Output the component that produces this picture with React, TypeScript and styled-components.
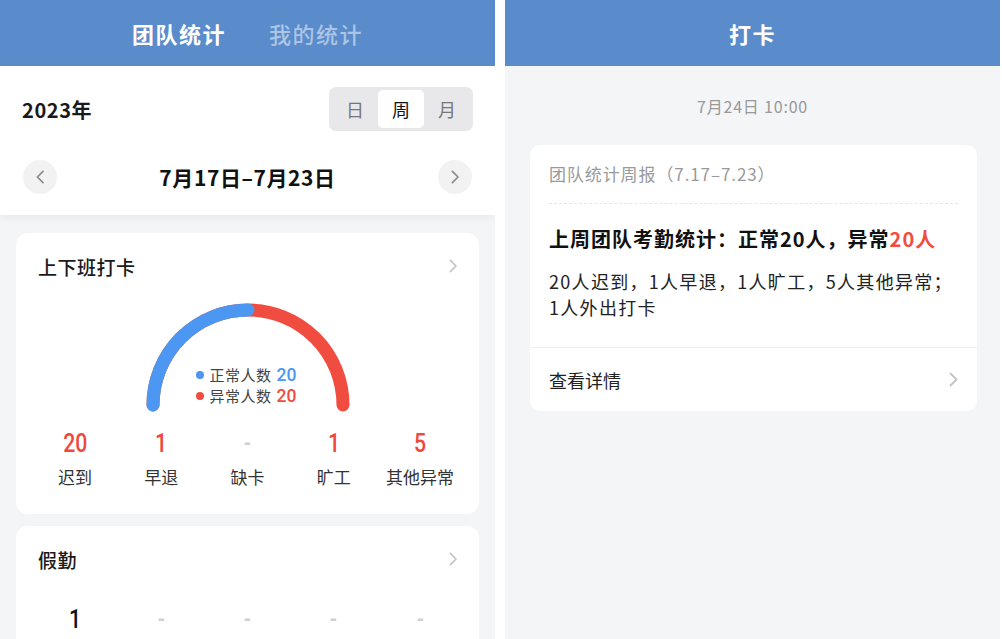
import React from "react";
import styled, { createGlobalStyle } from "styled-components";

const Global = createGlobalStyle`
  html, body { margin: 0; padding: 0; background: #ffffff; }
  body { font-family: "Noto Sans CJK SC", "Noto Sans", sans-serif; -webkit-font-smoothing: antialiased; }
  * { box-sizing: border-box; }
`;

const Page = styled.div`
  display: flex;
  gap: 10px;
  width: 1002px;
  height: 639px;
  overflow: hidden;
  background: #ffffff;
`;

const Phone = styled.div`
  width: 495px;
  height: 639px;
  display: flex;
  flex-direction: column;
  background: #f4f5f7;
  overflow: hidden;
`;

const Header = styled.div`
  height: 66px;
  flex: none;
  background: #5a8bcb;
  display: flex;
  align-items: center;
  justify-content: center;
  gap: 43px;
`;

const HeaderTab = styled.div<{ $active?: boolean }>`
  font-size: 22px;
  font-weight: ${(p) => (p.$active ? 600 : 500)};
  color: ${(p) => (p.$active ? "#ffffff" : "rgba(255,255,255,0.5)")};
  letter-spacing: 1.5px;
  line-height: 30px;
`;

const DateSection = styled.div`
  background: #ffffff;
  padding: 21px 22px 21px 22px;
  display: flex;
  flex-direction: column;
  gap: 29px;
  box-shadow: 0 3px 8px rgba(0, 0, 0, 0.05);
  position: relative;
  z-index: 1;
`;

const YearRow = styled.div`
  display: flex;
  align-items: center;
  justify-content: space-between;
`;

const Year = styled.div`
  font-size: 20px;
  font-weight: 600;
  color: #1a1a1a;
  letter-spacing: 0.6px;
`;

const Segment = styled.div`
  display: flex;
  padding: 3px;
  background: #e8e8ea;
  border-radius: 7px;
`;

const SegItem = styled.div<{ $active?: boolean }>`
  width: 46px;
  height: 38px;
  display: flex;
  align-items: center;
  justify-content: center;
  font-size: 18px;
  border-radius: 5px;
  color: ${(p) => (p.$active ? "#111" : "#777")};
  background: ${(p) => (p.$active ? "#ffffff" : "transparent")};
`;

const RangeRow = styled.div`
  display: flex;
  align-items: center;
  justify-content: space-between;
  padding: 0 1px;
`;

const CircleBtn = styled.div`
  width: 34px;
  height: 34px;
  border-radius: 50%;
  background: #f2f2f3;
  display: flex;
  align-items: center;
  justify-content: center;
  color: #8a8a8a;
`;

const RangeText = styled.div`
  font-size: 21px;
  font-weight: 600;
  color: #111;
  letter-spacing: 0.6px;
`;

const Content = styled.div`
  padding: 18px 16px 0;
  display: flex;
  flex-direction: column;
  gap: 12px;
`;

const Card = styled.div`
  background: #ffffff;
  border-radius: 12px;
  padding: 21px 22px 26px;
`;

const CardHead = styled.div`
  display: flex;
  align-items: center;
  justify-content: space-between;
  height: 24px;
`;

const CardTitle = styled.div`
  font-size: 19px;
  font-weight: 500;
  color: #1a1a1a;
  letter-spacing: 0.5px;
`;

const GaugeWrap = styled.div`
  position: relative;
  width: 220px;
  height: 120px;
  margin: 19px auto 0;
`;

const Legend = styled.div`
  position: absolute;
  left: 58px;
  top: 67px;
  display: flex;
  flex-direction: column;
`;

const LegendRow = styled.div`
  display: flex;
  align-items: center;
  height: 21px;
  line-height: 18px;
`;

const Dot = styled.span<{ $color: string }>`
  width: 8px;
  height: 8px;
  border-radius: 50%;
  background: ${(p) => p.$color};
  margin-right: 6px;
`;

const LegendLabel = styled.span`
  font-size: 15px;
  line-height: 18px;
  color: #444;
  margin-right: 5px;
  letter-spacing: 0.5px;
`;

const LegendNum = styled.span<{ $color: string }>`
  font-family: Roboto, "Noto Sans", sans-serif;
  font-size: 17.5px;
  line-height: 18px;
  font-weight: 500;
  color: ${(p) => p.$color};
`;

const Stats = styled.div<{ $top: number }>`
  display: grid;
  grid-template-columns: repeat(5, 1fr);
  margin: ${(p) => p.$top}px -6px 0;
`;

const Stat = styled.div`
  display: flex;
  flex-direction: column;
  align-items: center;
`;

const StatNum = styled.div<{ $color: string }>`
  font-family: Roboto, "Noto Sans", sans-serif;
  font-size: 25px;
  font-weight: 500;
  line-height: 28px;
  color: ${(p) => p.$color};
  transform: scaleX(0.85);
`;

const StatLabel = styled.div`
  margin-top: 8px;
  font-size: 17px;
  line-height: 22px;
  color: #333;
`;

const Chevron = ({ size = 14, color = "#c4c4c4", dir = "right" }: { size?: number; color?: string; dir?: "left" | "right" }) => (
  <svg width={size * 0.6} height={size} viewBox="0 0 9 15" fill="none">
    <path
      d={dir === "right" ? "M1.5 1.5 L7.5 7.5 L1.5 13.5" : "M7.5 1.5 L1.5 7.5 L7.5 13.5"}
      stroke={color}
      strokeWidth="1.8"
      strokeLinecap="round"
      strokeLinejoin="round"
    />
  </svg>
);

const Gauge = () => {
  const cx = 110;
  const cy = 108;
  const r = 95;
  return (
    <svg width="220" height="120" viewBox="0 0 220 120">
      <path
        d={`M ${cx - r} ${cy} A ${r} ${r} 0 0 1 ${cx + r} ${cy}`}
        stroke="#f04c40"
        strokeWidth="13"
        fill="none"
        strokeLinecap="round"
      />
      <path
        d={`M ${cx - r} ${cy} A ${r} ${r} 0 0 1 ${cx} ${cy - r}`}
        stroke="#4b97f1"
        strokeWidth="13"
        fill="none"
        strokeLinecap="round"
      />
    </svg>
  );
};

/* right panel */
const TimeStamp = styled.div`
  text-align: center;
  font-size: 16px;
  color: #999;
  margin-top: 29px;
  line-height: 22px;
  letter-spacing: 0.8px;
`;

const MsgCard = styled.div`
  margin: 28px 23px 0 25px;
  background: #ffffff;
  border-radius: 10px;
`;

const MsgBody = styled.div`
  padding: 16px 19px 27px;
`;

const MsgTitle = styled.div`
  font-size: 17px;
  color: #9a9a9a;
  line-height: 26px;
  padding-bottom: 16px;
  border-bottom: 1px dashed #e6e6e6;
  letter-spacing: 0.9px;
`;

const MsgHeadline = styled.div`
  margin-top: 22px;
  font-size: 20px;
  font-weight: 600;
  color: #111;
  line-height: 26px;
  letter-spacing: 1px;
`;

const Red = styled.span`
  color: #f04c40;
`;

const MsgText = styled.div`
  margin-top: 16px;
  font-size: 18px;
  color: #222;
  line-height: 26px;
  letter-spacing: 1.3px;
`;

const MsgFooter = styled.div`
  border-top: 1px solid #efefef;
  height: 64px;
  display: flex;
  align-items: center;
  justify-content: space-between;
  padding: 0 19px 0 19px;
  font-size: 18px;
  color: #222;
`;

const statsA = [
  { n: "20", l: "迟到", c: "#f0473c" },
  { n: "1", l: "早退", c: "#f0473c" },
  { n: "-", l: "缺卡", c: "#d0d0d0" },
  { n: "1", l: "旷工", c: "#f0473c" },
  { n: "5", l: "其他异常", c: "#f0473c" },
];

const statsB = [
  { n: "1", c: "#111" },
  { n: "-", c: "#d0d0d0" },
  { n: "-", c: "#d0d0d0" },
  { n: "-", c: "#d0d0d0" },
  { n: "-", c: "#d0d0d0" },
];

export default function App() {
  return (
    <>
      <Global />
      <Page>
        <Phone>
          <Header>
            <HeaderTab $active>团队统计</HeaderTab>
            <HeaderTab>我的统计</HeaderTab>
          </Header>
          <DateSection>
            <YearRow>
              <Year>2023年</Year>
              <Segment>
                <SegItem>日</SegItem>
                <SegItem $active>周</SegItem>
                <SegItem>月</SegItem>
              </Segment>
            </YearRow>
            <RangeRow>
              <CircleBtn>
                <Chevron size={14} color="#8a8a8a" dir="left" />
              </CircleBtn>
              <RangeText>7月17日–7月23日</RangeText>
              <CircleBtn>
                <Chevron size={14} color="#8a8a8a" />
              </CircleBtn>
            </RangeRow>
          </DateSection>
          <Content>
            <Card>
              <CardHead>
                <CardTitle>上下班打卡</CardTitle>
                <Chevron size={14} />
              </CardHead>
              <GaugeWrap>
                <Gauge />
                <Legend>
                  <LegendRow>
                    <Dot $color="#4b97f1" />
                    <LegendLabel>正常人数</LegendLabel>
                    <LegendNum $color="#4b97f1">20</LegendNum>
                  </LegendRow>
                  <LegendRow>
                    <Dot $color="#f04c40" />
                    <LegendLabel>异常人数</LegendLabel>
                    <LegendNum $color="#f04c40">20</LegendNum>
                  </LegendRow>
                </Legend>
              </GaugeWrap>
              <Stats $top={13}>
                {statsA.map((s) => (
                  <Stat key={s.l}>
                    <StatNum $color={s.c}>{s.n}</StatNum>
                    <StatLabel>{s.l}</StatLabel>
                  </Stat>
                ))}
              </Stats>
            </Card>
            <Card>
              <CardHead>
                <CardTitle>假勤</CardTitle>
                <Chevron size={14} />
              </CardHead>
              <Stats $top={35}>
                {statsB.map((s, i) => (
                  <Stat key={i}>
                    <StatNum $color={s.c}>{s.n}</StatNum>
                  </Stat>
                ))}
              </Stats>
            </Card>
          </Content>
        </Phone>
        <Phone>
          <Header>
            <HeaderTab $active>打卡</HeaderTab>
          </Header>
          <TimeStamp>7月24日 10:00</TimeStamp>
          <MsgCard>
            <MsgBody>
              <MsgTitle>团队统计周报（7.17–7.23）</MsgTitle>
              <MsgHeadline>
                上周团队考勤统计：正常20人，异常<Red>20人</Red>
              </MsgHeadline>
              <MsgText>
                20人迟到，1人早退，1人旷工，5人其他异常；
                <br />
                1人外出打卡
              </MsgText>
            </MsgBody>
            <MsgFooter>
              查看详情
              <Chevron size={15} />
            </MsgFooter>
          </MsgCard>
        </Phone>
      </Page>
    </>
  );
}
